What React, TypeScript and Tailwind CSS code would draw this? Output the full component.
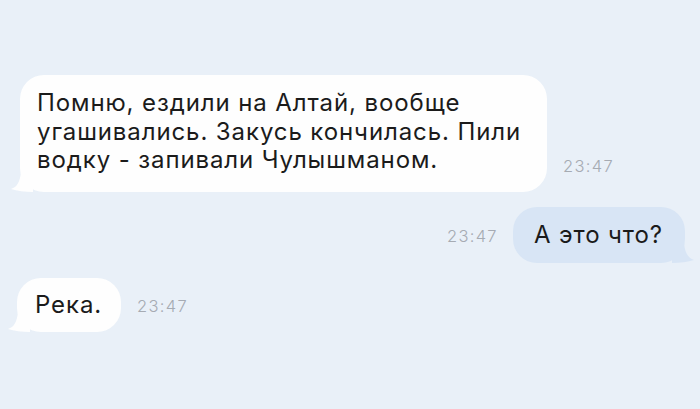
import React from "react";

function TailLeft({ fill }: { fill: string }) {
  return (
    <svg
      className="absolute -left-[9px] bottom-0"
      width="22"
      height="20"
      viewBox="0 0 22 20"
    >
      <path d="M22 0 L22 20 C14 20 6 19 0 17 C6 15 9 10 10 0 Z" fill={fill} />
    </svg>
  );
}

function TailRight({ fill }: { fill: string }) {
  return (
    <svg
      className="absolute -right-[9px] bottom-0"
      width="22"
      height="20"
      viewBox="0 0 22 20"
    >
      <path d="M0 0 L0 20 C8 20 16 19 22 17 C16 15 13 10 12 0 Z" fill={fill} />
    </svg>
  );
}

function Time({ children }: { children: React.ReactNode }) {
  return (
    <span className="block text-[16.5px] leading-none text-[#a6abb3] tracking-[1.3px] font-light">
      {children}
    </span>
  );
}

export default function App() {
  return (
    <div
      className="w-[700px] h-[409px] bg-[#e9f0f8] overflow-hidden flex flex-col text-[#1b1b1b]"
      style={{ fontFamily: 'Inter, "Liberation Sans", Arial, sans-serif' }}
    >
      <div className="flex items-end pl-[20px] pt-[75px]">
        <div className="relative bg-[#fefefe] rounded-[24px] pl-[17px] pr-[26px] pt-[14px] pb-[17px] text-[24px] leading-[28.5px] tracking-[0.9px]">
          <TailLeft fill="#fefefe" />
          <span className="relative">
            Помню, ездили на Алтай, вообще
            <br />
            угашивались. Закусь кончилась. Пили
            <br />
            водку - запивали Чулышманом.
          </span>
        </div>
        <div className="ml-[16px] mb-[17px]">
          <Time>23:47</Time>
        </div>
      </div>

      <div className="flex items-end justify-end pr-[15px] mt-[15px]">
        <div className="mr-[15px] mb-[18px]">
          <Time>23:47</Time>
        </div>
        <div className="relative bg-[#d8e5f5] rounded-[24px] pl-[21px] pr-[22px] pt-[14px] pb-[14px] text-[24px] leading-[28px] tracking-[0.9px]">
          <TailRight fill="#d8e5f5" />
          <span className="relative">А это что?</span>
        </div>
      </div>

      <div className="flex items-end pl-[17px] mt-[15px]">
        <div className="relative bg-[#fefefe] rounded-[24px] pl-[18px] pr-[19px] pt-[13px] pb-[13px] text-[24px] leading-[28px] tracking-[0.9px]">
          <TailLeft fill="#fefefe" />
          <span className="relative">Река.</span>
        </div>
        <div className="ml-[16px] mb-[17px]">
          <Time>23:47</Time>
        </div>
      </div>
    </div>
  );
}
